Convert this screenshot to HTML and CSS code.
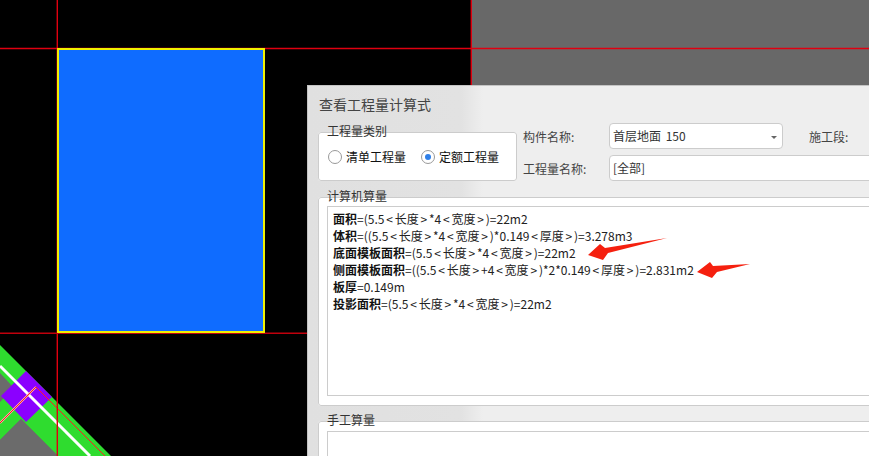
FILE: index.html
```html
<!DOCTYPE html>
<html lang="zh-CN">
<head>
    <meta charset="UTF-8">
    <title>查看工程量计算式</title>
    <link rel="stylesheet" href="styles.css">
</head>
<body>
    <svg class="drawing" width="869" height="456" viewBox="0 0 869 456">
        <rect x="471" y="0" width="398" height="85" fill="#686868"/>
        <polygon points="0,373 58,456 0,456" fill="#6b6b6b"/>
        <polygon points="0,345 111,456 58,456 0,398" fill="#2fdc2f"/>
        <polygon points="0,373 14,388 0,402" fill="#6b6b6b"/>
        <polygon points="0,402 26,376 26,414 0,440" fill="#2fdc2f"/>
        <polygon points="0,440 21,419 58,456 0,456" fill="#6b6b6b"/>
        <polygon points="1,396 26,371 52,397 26,422" fill="#8b00ff"/>
        <line x1="0" y1="366" x2="90" y2="456" stroke="#fff" stroke-width="3"/>
        <line x1="0" y1="423" x2="36" y2="387" stroke="#ffb0b0" stroke-width="2"/>
        <polyline points="0,423 36,387 105,456" fill="none" stroke="#ff2020" stroke-width="1"/>
        <line x1="57.3" y1="0" x2="57.3" y2="456" stroke="#e00010" stroke-width="1.4"/>
        <line x1="0" y1="48.5" x2="869" y2="48.5" stroke="#e00010" stroke-width="1.4"/>
        <line x1="0" y1="333.3" x2="307" y2="333.3" stroke="#c0000c" stroke-width="1.4"/>
        <line x1="471.3" y1="0" x2="471.3" y2="85" stroke="#e00010" stroke-width="1.4"/>
        <rect x="58" y="49" width="206" height="283" fill="#0f6cff" stroke="#f0f000" stroke-width="2"/>
    </svg>

    <div class="dialog">
        <div class="dialog-title">查看工程量计算式</div>
        <div class="top-row">
            <fieldset class="group type-group">
                <legend>工程量类别</legend>
                <span class="radio"><i class="radio-dot"></i>清单工程量</span>
                <span class="radio"><i class="radio-dot checked"></i>定额工程量</span>
            </fieldset>
            <div class="fields">
                <div class="field-row">
                    <label>构件名称:</label>
                    <div class="combo">首层地面 150<i class="caret"></i></div>
                    <label class="stage-label">施工段:</label>
                </div>
                <div class="field-row">
                    <label>工程量名称:</label>
                    <div class="combo wide">[全部]</div>
                </div>
            </div>
        </div>
        <fieldset class="group calc-group">
            <legend>计算机算量</legend>
            <div class="formula-box">
                <p><b>面积</b>=(5.5<span class="op">&lt;</span>长度<span class="op">&gt;</span>*4<span class="op">&lt;</span>宽度<span class="op">&gt;</span>)=22m2</p>
                <p><b>体积</b>=((5.5<span class="op">&lt;</span>长度<span class="op">&gt;</span>*4<span class="op">&lt;</span>宽度<span class="op">&gt;</span>)*0.149<span class="op">&lt;</span>厚度<span class="op">&gt;</span>)=3.278m3</p>
                <p><b>底面模板面积</b>=(5.5<span class="op">&lt;</span>长度<span class="op">&gt;</span>*4<span class="op">&lt;</span>宽度<span class="op">&gt;</span>)=22m2</p>
                <p><b>侧面模板面积</b>=((5.5<span class="op">&lt;</span>长度<span class="op">&gt;</span>+4<span class="op">&lt;</span>宽度<span class="op">&gt;</span>)*2*0.149<span class="op">&lt;</span>厚度<span class="op">&gt;</span>)=2.831m2</p>
                <p><b>板厚</b>=0.149m</p>
                <p><b>投影面积</b>=(5.5<span class="op">&lt;</span>长度<span class="op">&gt;</span>*4<span class="op">&lt;</span>宽度<span class="op">&gt;</span>)=22m2</p>
            </div>
        </fieldset>
        <fieldset class="group manual-group">
            <legend>手工算量</legend>
            <div class="formula-box"></div>
        </fieldset>
    </div>

    <!-- hand drawn arrows on top of the dialog -->
    <svg class="arrows" width="869" height="456" viewBox="0 0 869 456">
        <polygon points="588,255 600,244 605,248 667,238 608,253 603,260" fill="#f5200f"/>
        <polygon points="697,272 710,262 713,266 750,264 717,272 712,278" fill="#f5200f"/>
    </svg>
</body>
</html>
```

FILE: styles.css
```css
html, body { margin: 0; height: 100%; }
body { width: 869px; height: 456px; background: #000; overflow: hidden; position: relative; font-family: "Noto Sans CJK SC", "Liberation Sans", sans-serif; font-size: 12px; color: #222; }
.drawing, .arrows { position: absolute; left: 0; top: 0; }
.dialog { position: absolute; left: 307px; top: 85px; width: 562px; height: 371px; overflow: hidden; box-sizing: border-box; padding: 0 0 0 10px; background: linear-gradient(to right, #e0e0e0 0, #e2e2e2 153px, #eee 175px); border-top: 1px solid #c4c4c4; border-left: 1px solid #c4c4c4; }
.dialog-title { font-size: 14px; line-height: 20px; padding: 8px 0 0 1px; height: 30px; color: #444; }
.top-row { display: flex; gap: 6px; margin-top: 8px; }
.group { margin: 0; padding: 0; background: #fff; border: 1px solid #ccc; border-radius: 3px; box-sizing: border-box; position: relative; flex: none; }
.group legend { position: absolute; left: 8px; top: -9px; padding: 0; font-size: 12px; line-height: 14px; color: #333; }
.type-group { width: 199px; height: 49px; display: flex; align-items: center; padding: 0 9px; gap: 15px; }
.radio { display: flex; align-items: center; gap: 4px; color: #111; line-height: 16px; white-space: nowrap; flex: none; }
.radio-dot { width: 12px; height: 12px; border: 1px solid #999; border-radius: 50%; background: #fff; position: relative; flex: none; }
.radio-dot.checked::after { content: ""; position: absolute; left: 3px; top: 3px; width: 6px; height: 6px; border-radius: 50%; background: #2f7fe8; }
.fields { display: flex; flex-direction: column; gap: 6px; margin-top: -9px; flex: none; }
.field-row { display: flex; align-items: center; height: 26px; }
.field-row label { width: 86px; color: #444; white-space: nowrap; flex: none; }
.field-row .stage-label { margin-left: 26px; width: 60px; }
.combo { width: 174px; height: 26px; box-sizing: border-box; border: 1px solid #ccc; border-radius: 4px; background: #fff; padding-left: 3px; line-height: 24px; color: #333; position: relative; flex: none; white-space: nowrap; word-spacing: 2px; }
.combo.wide { width: 400px; }
.caret { position: absolute; right: 5px; top: 12px; border-left: 3px solid transparent; border-right: 3px solid transparent; border-top: 3px solid #666; }
.calc-group { width: 600px; height: 209px; margin-top: 16px; padding: 8px 0 0 8px; }
.manual-group { width: 600px; height: 60px; margin-top: 15px; padding: 9px 0 0 8px; }
.formula-box { width: 580px; height: 190px; box-sizing: border-box; border: 1px solid #ccc; background: #fff; padding: 3px 0 0 5px; }
.manual-group .formula-box { height: 60px; }
.formula-box p { margin: 0; font-size: 12px; line-height: 17px; color: #222; white-space: nowrap; }
.formula-box b { font-weight: 700; color: #111; }
.op { margin: 0 1.8px; }
```
